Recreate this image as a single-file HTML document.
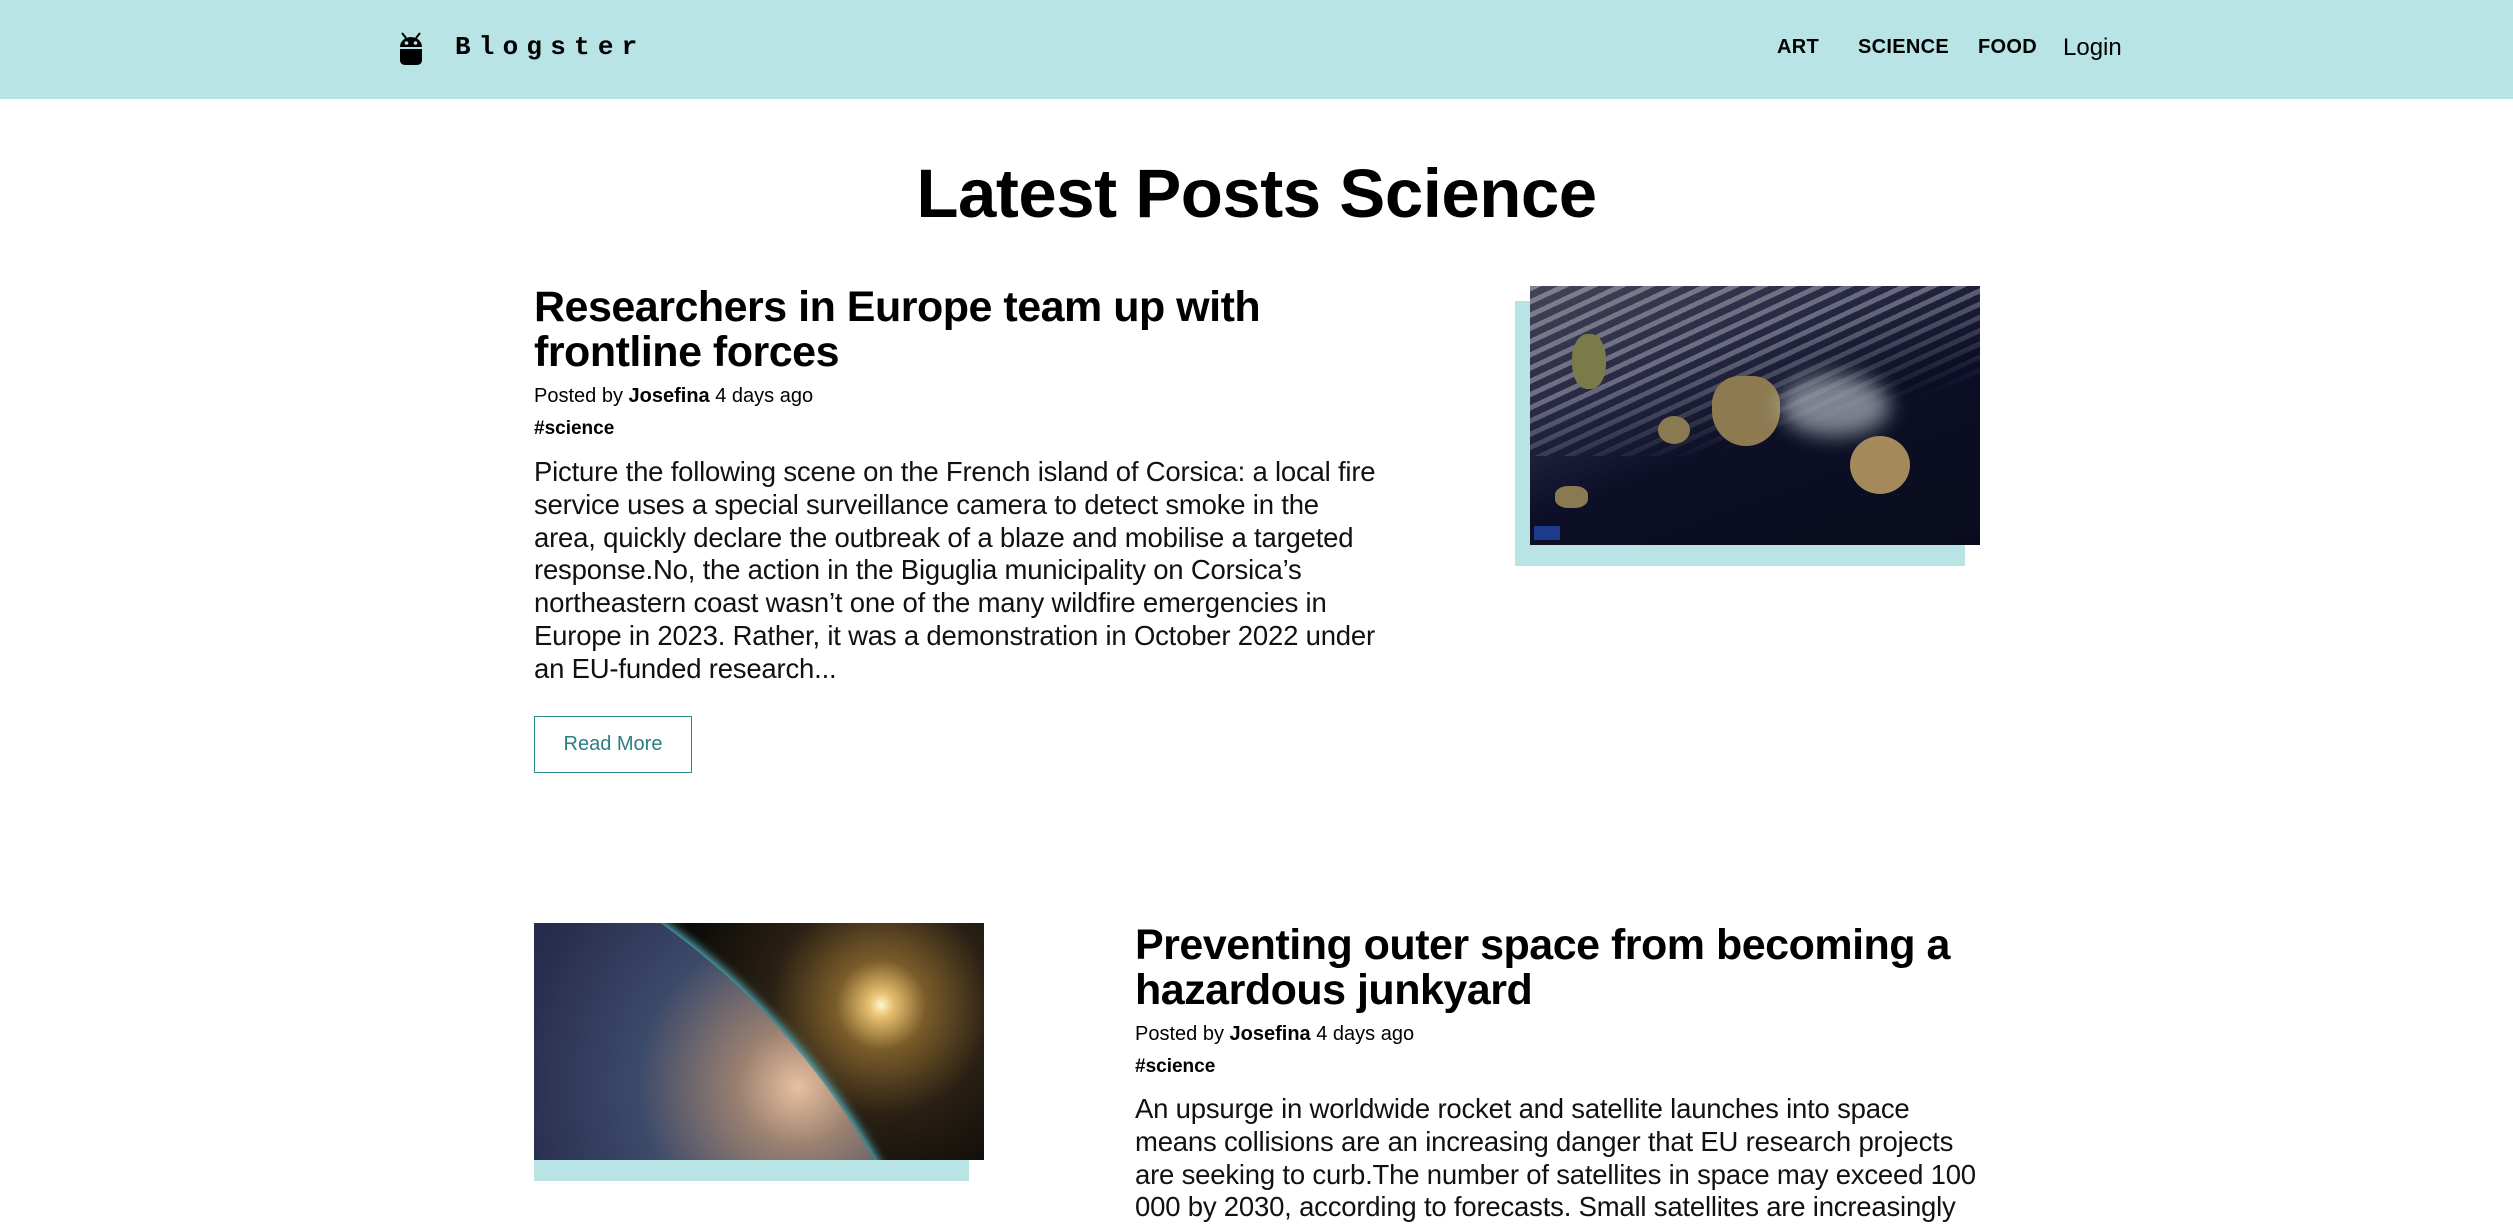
<!DOCTYPE html>
<html><head><meta charset="utf-8"><style>
*{margin:0;padding:0;box-sizing:border-box}
html,body{width:2513px;height:1229px;overflow:hidden}
body{background:#fff;font-family:"Liberation Sans",Arial,sans-serif;color:#000;position:relative}
.hdr{position:absolute;left:0;top:0;width:2513px;height:99px;background:#b8e4e6}
.logo{position:absolute;left:455px;top:32px;font-family:"Liberation Mono",monospace;font-weight:bold;font-size:26px;letter-spacing:8.2px}
.nav{position:absolute;top:36px;font-size:20px;font-weight:bold;letter-spacing:0.3px}
.abs{position:absolute;white-space:nowrap}
h1{position:absolute;left:0;width:2513px;text-align:center;top:154px;font-size:69px;font-weight:bold;letter-spacing:-0.5px}
.t{font-size:43px;font-weight:bold;line-height:45px;letter-spacing:-0.5px}
.m{font-size:20px}
.tag{font-size:19px;font-weight:bold}
.p{font-size:27.5px;line-height:32.8px;letter-spacing:-0.2px;color:#111}
.btn{position:absolute;left:534px;top:716px;width:158px;height:57px;border:1.5px solid #2a8c8c;color:#2a7f82;font-size:20px;text-align:center;line-height:54px}
</style></head><body>
<div class="hdr">
<svg style="position:absolute;left:398px;top:30px" width="26" height="36" viewBox="0 0 26 36"><line x1="4" y1="3" x2="8" y2="8" stroke="#000" stroke-width="2"/><line x1="22" y1="3" x2="18" y2="8" stroke="#000" stroke-width="2"/><path d="M2 17 A11 10 0 0 1 24 17 Z" fill="#000"/><rect x="2" y="19" width="22" height="12" fill="#000"/><path d="M2 30 Q2 35 8 35 L18 35 Q24 35 24 30Z" fill="#000"/><circle cx="8.5" cy="13" r="1.8" fill="#b8e4e6"/><circle cx="17.5" cy="13" r="1.8" fill="#b8e4e6"/></svg>
<div class="logo">Blogster</div>
<div class="nav" style="left:1777px">ART</div>
<div class="nav" style="left:1858px">SCIENCE</div>
<div class="nav" style="left:1978px">FOOD</div>
<div class="abs" style="left:2063px;top:34px;font-size:24px">Login</div>
</div>
<h1>Latest Posts Science</h1>

<div class="abs t" style="left:534px;top:285px">Researchers in Europe team up with<br>frontline forces</div>
<div class="abs m" style="left:534px;top:385px">Posted by <b>Josefina</b> 4 days ago</div>
<div class="abs tag" style="left:534px;top:418px">#science</div>
<div class="abs p" style="left:534px;top:456px">Picture the following scene on the French island of Corsica: a local fire<br>service uses a special surveillance camera to detect smoke in the<br>area, quickly declare the outbreak of a blaze and mobilise a targeted<br>response.No, the action in the Biguglia municipality on Corsica’s<br>northeastern coast wasn’t one of the many wildfire emergencies in<br>Europe in 2023. Rather, it was a demonstration in October 2022 under<br>an EU-funded research...</div>
<div class="btn">Read More</div>

<div style="position:absolute;left:1515px;top:301px;width:450px;height:265px;background:#b8e4e6"></div>
<div style="position:absolute;left:1530px;top:286px;width:450px;height:259px;overflow:hidden;background:linear-gradient(160deg,#4a4a5e 0%,#2a2c48 30%,#0c0f26 55%,#0a0c1e 100%)">
<div style="position:absolute;left:0;top:0;width:450px;height:170px;background:repeating-linear-gradient(155deg,rgba(255,255,255,.3) 0 5px,rgba(20,20,50,.1) 5px 12px);-webkit-mask-image:linear-gradient(165deg,#000 40%,transparent 75%);mask-image:linear-gradient(165deg,#000 40%,transparent 75%)"></div>
<div style="position:absolute;left:42px;top:48px;width:34px;height:55px;border-radius:45%;background:#7b7a4a"></div>
<div style="position:absolute;left:182px;top:90px;width:68px;height:70px;border-radius:40% 40% 50% 50%;background:#8d7a50"></div>
<div style="position:absolute;left:250px;top:90px;width:110px;height:60px;border-radius:50%;background:rgba(220,225,230,.55);filter:blur(10px)"></div>
<div style="position:absolute;left:128px;top:130px;width:32px;height:28px;border-radius:50%;background:#8a7a52"></div>
<div style="position:absolute;left:320px;top:150px;width:60px;height:58px;border-radius:50%;background:#a48a5a"></div>
<div style="position:absolute;left:25px;top:200px;width:33px;height:22px;border-radius:40%;background:#8a7a52"></div>
<div style="position:absolute;left:4px;top:240px;width:26px;height:14px;background:#1e3a8a"></div>
</div>

<div style="position:absolute;left:534px;top:1160px;width:435px;height:21px;background:#b8e4e6"></div>
<div style="position:absolute;left:534px;top:923px;width:450px;height:237px;overflow:hidden;background:radial-gradient(circle at 347px 82px,#fff6d0 0,#e8c070 12px,#7a5c2a 45px,#2a2014 110px,#0d0b08 200px)">
<div style="position:absolute;left:-1036px;top:-136px;width:1472px;height:1472px;border-radius:50%;background:radial-gradient(circle at 1300px 300px,#e8c0a0 0,#9a8070 60px,#3c4a6a 160px,#2a2e4e 280px,#141834 500px);box-shadow:0 0 10px 3px #5cc0d0"></div>
</div>

<div class="abs t" style="left:1135px;top:923px">Preventing outer space from becoming a<br>hazardous junkyard</div>
<div class="abs m" style="left:1135px;top:1023px">Posted by <b>Josefina</b> 4 days ago</div>
<div class="abs tag" style="left:1135px;top:1056px">#science</div>
<div class="abs p" style="left:1135px;top:1093px">An upsurge in worldwide rocket and satellite launches into space<br>means collisions are an increasing danger that EU research projects<br>are seeking to curb.The number of satellites in space may exceed 100<br>000 by 2030, according to forecasts. Small satellites are increasingly</div>
</body></html>
